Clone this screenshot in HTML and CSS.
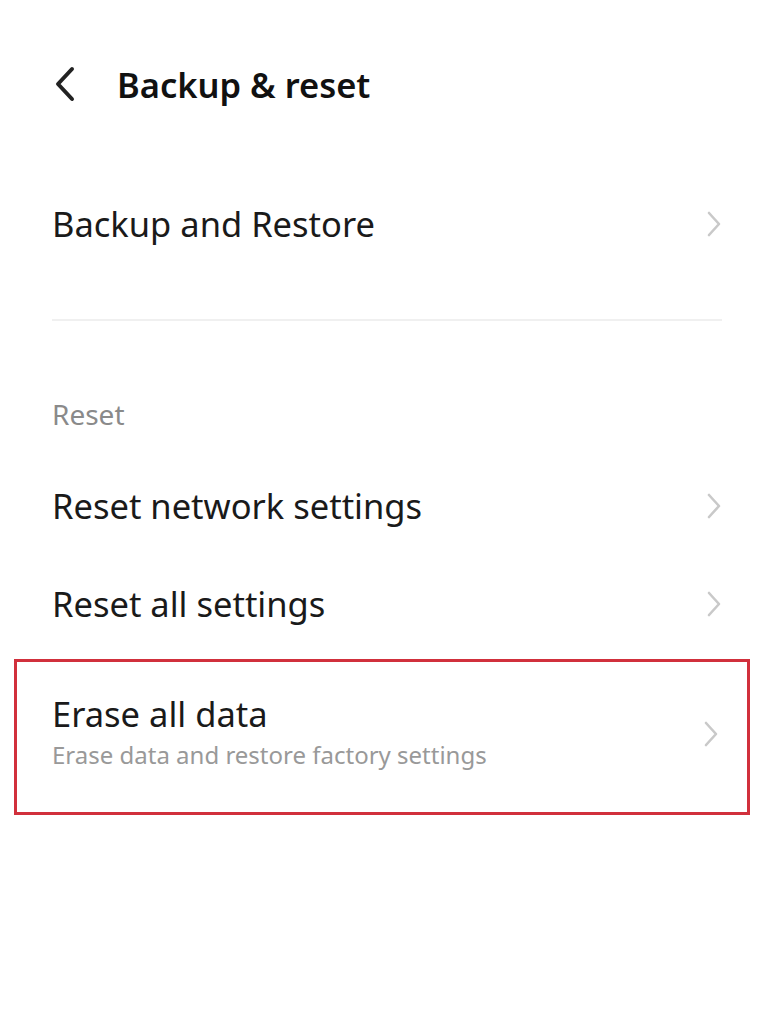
FILE: index.html
```html
<!DOCTYPE html>
<html>
<head>
    <title>Backup &amp; reset</title>
    <link rel="stylesheet" href="styles.css">
</head>
<body>
    <div class="page">
        <div class="header">
            <svg class="back" width="24" height="36" viewBox="0 0 24 36">
                <polyline points="19,3 5,18 19,33" fill="none" stroke="#222" stroke-width="4" stroke-linecap="round" stroke-linejoin="round"/>
            </svg>
            <h1 class="title">Backup &amp; reset</h1>
        </div>

        <div class="row row-first">
            <div class="row-text">
                <div class="row-title">Backup and Restore</div>
            </div>
            <svg class="chevron" width="16" height="28" viewBox="0 0 16 28">
                <polyline points="3,3 13,14 3,25" fill="none" stroke="#c9c9c9" stroke-width="2.6" stroke-linecap="round" stroke-linejoin="round"/>
            </svg>
        </div>

        <div class="divider"></div>

        <div class="section-label">Reset</div>

        <div class="row">
            <div class="row-text">
                <div class="row-title">Reset network settings</div>
            </div>
            <svg class="chevron" width="16" height="28" viewBox="0 0 16 28">
                <polyline points="3,3 13,14 3,25" fill="none" stroke="#c9c9c9" stroke-width="2.6" stroke-linecap="round" stroke-linejoin="round"/>
            </svg>
        </div>

        <div class="row">
            <div class="row-text">
                <div class="row-title">Reset all settings</div>
            </div>
            <svg class="chevron" width="16" height="28" viewBox="0 0 16 28">
                <polyline points="3,3 13,14 3,25" fill="none" stroke="#c9c9c9" stroke-width="2.6" stroke-linecap="round" stroke-linejoin="round"/>
            </svg>
        </div>

        <div class="row row-marked">
            <div class="row-text">
                <div class="row-title">Erase all data</div>
                <div class="row-sub">Erase data and restore factory settings</div>
            </div>
            <svg class="chevron" width="16" height="28" viewBox="0 0 16 28">
                <polyline points="3,3 13,14 3,25" fill="none" stroke="#c9c9c9" stroke-width="2.6" stroke-linecap="round" stroke-linejoin="round"/>
            </svg>
        </div>
    </div>
</body>
</html>
```

FILE: styles.css
```css
body {
    margin: 0;
    background-color: #fff;
    font-family: "Noto Sans", "Open Sans", sans-serif;
    color: #1a1a1a;
}

.page {
    width: 774px;
}

.header {
    display: flex;
    align-items: center;
    height: 168px;
    padding-left: 53px;
}

.back {
    display: block;
}

.title {
    margin: 0 0 0 40px;
    font-size: 34.5px;
    font-weight: 600;
    color: #111;
}

.row {
    display: flex;
    align-items: center;
    height: 98px;
    padding: 0 52px 0 52px;
}

.row-first {
    height: 112px;
}

.row-text {
    flex: 1;
}

.row-title {
    font-size: 34.5px;
    line-height: 40px;
}

.row-sub {
    margin-top: 5px;
    font-size: 24px;
    line-height: 32px;
    color: #999;
}

.chevron {
    display: block;
}

.divider {
    height: 2px;
    margin: 39px 52px 0 52px;
    background-color: #f0f0f0;
}

.section-label {
    padding: 76px 0 0 52px;
    margin-bottom: 26px;
    line-height: 34px;
    font-size: 28px;
    color: #8a8a8a;
}

.row-marked {
    height: 150px;
    margin: 6px 24px 0 14px;
    padding: 0 28px 0 35px;
    border: 3px solid #d1303c;
}

.row-marked .row-text {
    padding-bottom: 10px;
}

.row-marked .chevron {
    margin-bottom: 6px;
}
```
